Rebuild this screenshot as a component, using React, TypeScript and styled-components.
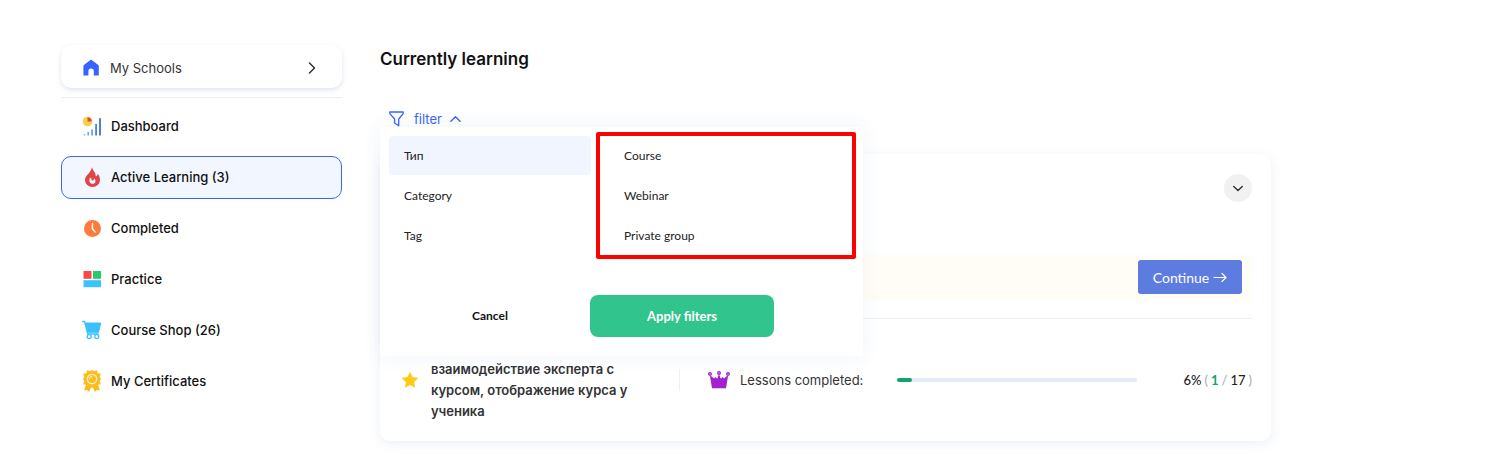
import React from "react";
import styled, { createGlobalStyle, css } from "styled-components";

const GlobalStyle = createGlobalStyle`
  * { box-sizing: border-box; }
  body { margin: 0; background: #fff; color: #111; font-family: Inter, "Liberation Sans", sans-serif; font-size: 13px; }
  button, a { font: inherit; color: inherit; text-decoration: none; cursor: pointer; }
  button { border: 0; padding: 0; background: none; }
  ul { list-style: none; margin: 0; padding: 0; }
`;

const Page = styled.div`
  display: grid;
  grid-template-columns: 281px minmax(0, 891px);
  gap: 38px;
  padding: 45px 61px 21px;
`;

const Sidebar = styled.nav`
  display: flex;
  flex-direction: column;
`;

const rowStyle = css`
  display: flex;
  align-items: center;
  height: 43px;
  border-radius: 10px;
`;

const SchoolsButton = styled.button`
  ${rowStyle}
  gap: 9px;
  padding: 2px 24px 0 20px;
  background: #fff;
  color: #333;
  box-shadow: 0 2px 5px rgba(40, 90, 160, 0.16);
  span { flex: 1; text-align: left; }
`;

const MenuList = styled.ul`
  display: flex;
  flex-direction: column;
  gap: 8px;
  margin-top: 9px;
  padding-top: 7px;
  border-top: 1px solid #eeeff3;
`;

const MenuLink = styled.a<{ $active?: boolean }>`
  ${rowStyle}
  gap: 9px;
  padding: 0 20px 2px;
  font-weight: 500;
  border: 1px solid ${(p) => (p.$active ? "#3a66f5" : "transparent")};
  background: ${(p) => (p.$active ? "#f1f6ff" : "transparent")};
`;

const Main = styled.main`
  min-width: 0;
`;

const Title = styled.h1`
  margin: 3px 0 0;
  font-size: 17px;
  font-weight: 600;
  line-height: 22px;
`;

const FilterArea = styled.div`
  position: relative;
  margin-top: 39px;
  padding-left: 9px;
`;

const FilterToggle = styled.button`
  display: flex;
  align-items: center;
  height: 20px;
  color: #3a66f5;
  svg:first-child { margin-right: 10px; }
  svg:last-child { margin-left: 8px; }
`;

const Popup = styled.section`
  position: absolute;
  z-index: 2;
  top: 18px;
  left: 0;
  width: 483px;
  padding: 9px 9px 19px;
  border-radius: 4px;
  background: #fff;
  box-shadow: 0 0 20px rgba(40, 90, 160, 0.07);
`;

const Columns = styled.div`
  display: grid;
  grid-template-columns: 202px 1fr;
  gap: 18px;
`;

const OptionList = styled.ul`
  display: flex;
  flex-direction: column;
  gap: 1px;
`;

const Option = styled.button<{ $selected?: boolean }>`
  width: 100%;
  height: 39px;
  padding: 0 15px;
  border-radius: 4px;
  text-align: left;
  font-family: Lato, sans-serif;
  font-size: 12px;
  color: #222;
  background: ${(p) => (p.$selected ? "#f1f5ff" : "transparent")};
`;

const Highlight = styled.div`
  position: absolute;
  top: 5px;
  left: 216px;
  width: 260px;
  height: 127px;
  border: 4px solid #f00;
  border-radius: 2px;
  pointer-events: none;
`;

const PopupActions = styled.div`
  display: grid;
  grid-template-columns: 184px 184px;
  gap: 8px;
  margin-top: 40px;
  padding-left: 9px;
`;

const ActionButton = styled.button<{ $primary?: boolean }>`
  height: 42px;
  padding-bottom: 1px;
  border-radius: 8px;
  font-family: Lato, sans-serif;
  font-size: ${(p) => (p.$primary ? "13px" : "12px")};
  font-weight: 700;
  color: ${(p) => (p.$primary ? "#fff" : "#111")};
  background: ${(p) => (p.$primary ? "#31c48d" : "transparent")};
`;

const Card = styled.article`
  margin-top: 25px;
  padding: 20px 19px 19px;
  border-radius: 10px;
  background: #fff;
  box-shadow: 0 3px 12px rgba(40, 90, 140, 0.09);
`;

const CardHeader = styled.header`
  display: flex;
  justify-content: flex-end;
`;

const RoundButton = styled.button`
  display: flex;
  align-items: center;
  justify-content: center;
  width: 28px;
  height: 28px;
  border-radius: 50%;
  background: #f1f1f2;
`;

const NextLesson = styled.div`
  display: flex;
  justify-content: flex-end;
  margin-top: 53px;
  padding: 5px 10px 6px;
  background: #fffdf5;
`;

const ContinueLink = styled.a`
  display: flex;
  align-items: center;
  justify-content: center;
  gap: 4px;
  width: 104px;
  height: 34px;
  border-radius: 3px;
  background: #5d7ce0;
  color: #fff;
  font-family: Lato, sans-serif;
  font-size: 14px;
`;

const Stats = styled.div`
  display: grid;
  grid-template-columns: 280px 1fr;
  align-items: center;
  min-height: 104px;
  margin-top: 18px;
  padding-top: 19px;
  border-top: 1px solid #eff0f3;
`;

const Topic = styled.div`
  display: flex;
  align-items: center;
  gap: 12px;
  align-self: stretch;
  padding-left: 2px;
`;

const TopicText = styled.p`
  align-self: flex-end;
  width: 210px;
  margin: 0;
  font-weight: 600;
  line-height: 21px;
  color: #333;
`;

const Lessons = styled.div`
  display: flex;
  align-items: center;
  height: 22px;
  padding-left: 28px;
  border-left: 1px solid #eff0f3;
  color: #333;
  svg { margin-right: 10px; }
`;

const Track = styled.div`
  flex: 1;
  height: 4px;
  margin: 0 46px 0 34px;
  border-radius: 2px;
  background: #e1ecf7;
`;

const Fill = styled.div`
  height: 4px;
  border-radius: 2px;
  background: #14a36d;
`;

const Score = styled.span`
  display: flex;
  gap: 3px;
  font-family: Lato, sans-serif;
  color: #a3a9b8;
  b { font-weight: 500; color: #222; }
  em { font-style: normal; font-weight: 700; color: #14a36d; }
`;

const Chevron = ({ d, size = 12, color = "#333" }: { d: string; size?: number; color?: string }) => (
  <svg width={size} height={size} viewBox="0 0 12 12" fill="none" stroke={color} strokeWidth="1.5" strokeLinecap="round" strokeLinejoin="round">
    <path d={d} />
  </svg>
);

const HomeIcon = () => (
  <svg width="20" height="20" viewBox="0 0 20 20">
    <path fill="#3763ff" d="M10 1.5 17 6.8q.8.6.8 1.500V17.500h-5v-4.200a2.700 2.700 0 0 0-5.400 0v4.200h-5V8.300q0-.9.8-1.500z" />
  </svg>
);

const DashboardIcon = () => (
  <svg width="20" height="20" viewBox="0 0 20 20">
    <circle cx="5.5" cy="5.5" r="4.8" fill="#f8cf48" />
    <path d="M5.500 5.500V1.200a4.500 4.500 0 0 1 4.300 4.300z" fill="#e54b3c" />
    <path d="M1.800 18.200h1.400v1.300H1.800zM5.400 16h1.700v3.500H5.400zM9.200 13.500H11v6H9.200z" fill="#7ba3e4" />
    <path d="M13.200 8H15v11.500h-1.800zM17 2.200h2v17.300h-2z" fill="#4e80d0" />
  </svg>
);

const FlameIcon = () => (
  <svg width="20" height="20" viewBox="-3 0 20 20">
    <path
      fill="#df4545"
      fillRule="evenodd"
      d="M7.200 0C7 3 11 5 10.800 9.600c1.200-.6 1.800-1.600 2-2.800C14.300 8.800 15 10.500 15 13A7.500 7 0 0 1 0 13C0 9.500 3 7.500 4.500 5.500 5.700 3.900 6.600 2 7.200 0zM5 10.500C3.400 14.500 5 16.800 7.800 16.800c2.800 0 3.600-3.300 1.400-5.600-.4 1.800-1.200 2.400-2.400 2.500.2-1.200-.6-2.700-1.800-3.200z"
    />
  </svg>
);

const ClockIcon = () => (
  <svg width="20" height="20" viewBox="0 0 20 20">
    <circle cx="10.500" cy="10.500" r="8.500" fill="#ff7a3d" />
    <path d="M10.400 5.500v5.200l3 3.400" fill="none" stroke="#fff" strokeWidth="1.400" strokeLinecap="round" />
  </svg>
);

const PracticeIcon = () => (
  <svg width="20" height="20" viewBox="0 0 20 20">
    <path fill="#f84848" d="M1.500 2h8v7.800h-8z" />
    <path fill="#2bc96b" d="M11 2h8v7.800h-8z" />
    <path fill="#3bc3ff" d="M1.500 11.200H19v7H1.500z" />
  </svg>
);

const CartIcon = () => (
  <svg width="20" height="20" viewBox="0 0 20 20" fill="none" stroke="#3bc0fb">
    <path d="M.3 1.500h2.300l3.100 12.500h11" strokeWidth="1.300" />
    <path d="M3.500 3h15.300l-2.300 9.300H6z" fill="#3bc0fb" />
    <circle cx="7.200" cy="16.600" r="2" strokeWidth="1.300" />
    <circle cx="14.800" cy="16.600" r="2" strokeWidth="1.300" />
  </svg>
);

const MedalIcon = () => (
  <svg width="20" height="24" viewBox="0 0 20 24">
    <path fill="#fdb913" d="M5 13 2 21.500l3-.7 2 2.300L10 16l3 7.100 2-2.300 3 .7L15 13z" />
    <path fill="#fdbd1e" d="m10 1 2.200 1.300L14.700 1l1 3.300 3.300.5-1.300 3L19 10l-1.300 2.200 1.300 3-3.300.5-1 2.800-2.500-.8L10 19l-2.200-1.300-2.500.8-1-2.800-3.300-.5 1.300-3L1 10l1.300-2.200-1.300-3 3.300-.5 1-3.300 2.500 1.300z" />
    <circle cx="10" cy="10" r="4.700" fill="#fdbd1e" stroke="#fff3cf" strokeWidth="1.200" />
    <path d="M7.500 10.300a2.600 2.600 0 0 1 2.700-2.900" fill="none" stroke="#fff3cf" />
  </svg>
);

const FunnelIcon = () => (
  <svg width="15" height="16" viewBox="0 0 15 16" fill="none" stroke="#3a66f5" strokeWidth="1.300" strokeLinejoin="round">
    <path d="M.8 1h13.400v1.600L9.700 8v6.800L5.600 12V8L.8 2.600z" />
  </svg>
);

const StarIcon = () => (
  <svg width="18" height="18" viewBox="0 0 18 18">
    <path fill="#ffcb14" d="m9 .8 2.500 5.300 5.800.8-4.200 4.100 1 5.700L9 14l-5.100 2.700 1-5.700L.7 6.900l5.800-.8z" />
  </svg>
);

const CrownIcon = () => (
  <svg width="22" height="18" viewBox="0 0 22 18" fill="#a121ce">
    <path d="M1.800 4 6 7.500 7.200 6l2 1.800L11 3l1.800 4.800 2-1.800L16 7.500 20.200 4l-2.200 13.300H4z" />
    <g fill="#e6b8f5" stroke="#a121ce" strokeWidth="1.300">
      <circle cx="2" cy="2.900" r="1.300" />
      <circle cx="11" cy="2" r="1.300" />
      <circle cx="20" cy="2.900" r="1.300" />
    </g>
  </svg>
);

const menu = [
  { label: "Dashboard", Icon: DashboardIcon },
  { label: "Active Learning (3)", Icon: FlameIcon, active: true },
  { label: "Completed", Icon: ClockIcon },
  { label: "Practice", Icon: PracticeIcon },
  { label: "Course Shop (26)", Icon: CartIcon },
  { label: "My Certificates", Icon: MedalIcon },
];

const groups = ["Тип", "Category", "Tag"];
const types = ["Course", "Webinar", "Private group"];

export default function App() {
  const done = 1;
  const total = 17;
  const percent = Math.round((done / total) * 100);
  return (
    <>
      <GlobalStyle />
      <Page>
        <Sidebar>
          <SchoolsButton>
            <HomeIcon />
            <span>My Schools</span>
            <Chevron d="M3.500 1 8.500 6l-5 5" />
          </SchoolsButton>
          <MenuList>
            {menu.map(({ label, Icon, active }) => (
              <li key={label}>
                <MenuLink href="#" $active={active}>
                  <Icon />
                  {label}
                </MenuLink>
              </li>
            ))}
          </MenuList>
        </Sidebar>
        <Main>
          <Title>Currently learning</Title>
          <FilterArea>
            <FilterToggle aria-expanded="true">
              <FunnelIcon />
              filter
              <Chevron d="M1 8 6 3l5 5" size={11} color="#3a66f5" />
            </FilterToggle>
            <Popup>
              <Columns>
                <OptionList>
                  {groups.map((name, i) => (
                    <li key={name}><Option $selected={i === 0}>{name}</Option></li>
                  ))}
                </OptionList>
                <OptionList>
                  {types.map((name) => (
                    <li key={name}><Option>{name}</Option></li>
                  ))}
                </OptionList>
              </Columns>
              <Highlight />
              <PopupActions>
                <ActionButton>Cancel</ActionButton>
                <ActionButton $primary>Apply filters</ActionButton>
              </PopupActions>
            </Popup>
          </FilterArea>
          <Card>
            <CardHeader>
              <RoundButton aria-label="Expand"><Chevron d="M1.800 4.500 6 8.500 10.200 4.500" /></RoundButton>
            </CardHeader>
            <NextLesson>
              <ContinueLink href="#">
                Continue
                <svg width="14" height="12" viewBox="0 0 14 12" fill="none" stroke="#fff" strokeWidth="1.200" strokeLinecap="round" strokeLinejoin="round">
                  <path d="M1 6.500h12M9 2.500l4 4-4 4" />
                </svg>
              </ContinueLink>
            </NextLesson>
            <Stats>
              <Topic>
                <StarIcon />
                <TopicText>взаимодействие эксперта с курсом, отображение курса у ученика</TopicText>
              </Topic>
              <Lessons>
                <CrownIcon />
                Lessons completed:
                <Track><Fill style={{ width: `${percent}%` }} /></Track>
                <Score><b>{percent}%</b><span>(</span><em>{done}</em><span>/</span><b>{total}</b><span>)</span></Score>
              </Lessons>
            </Stats>
          </Card>
        </Main>
      </Page>
    </>
  );
}
